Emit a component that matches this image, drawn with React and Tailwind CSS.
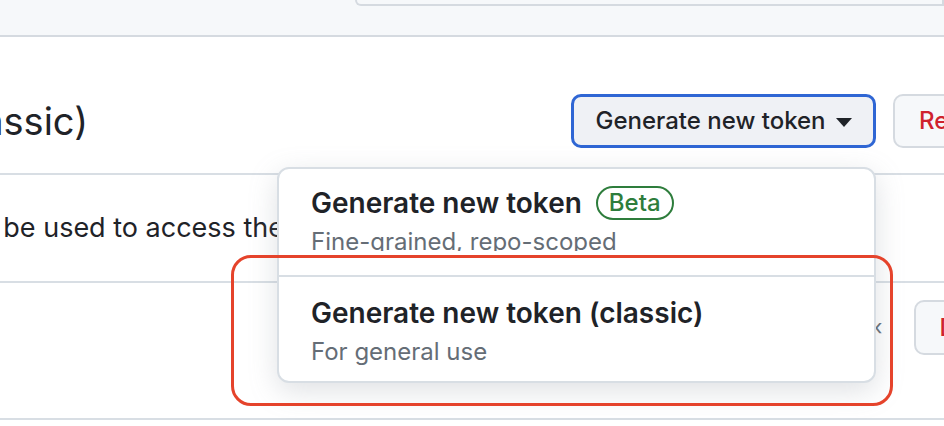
import React from "react";

function Caret() {
  return (
    <svg width="16" height="9" viewBox="0 0 16 9" className="ml-[10px] mt-[2px]">
      <path d="M0 0 L16 0 L8 9 Z" fill="#1f2328" />
    </svg>
  );
}

export default function App() {
  return (
    <div className="relative w-[944px] h-[426px] overflow-hidden bg-white font-[family-name:Inter,sans-serif] text-[#1f2328]">
      {/* top gray strip */}
      <div className="h-[37px] bg-[#f6f8fa] border-b-2 border-[#d5dae0]">
        <div className="ml-[355px] h-[6px] border-2 border-t-0 border-[#d5dae0] rounded-bl-[8px] bg-[#f6f8fa]" />
      </div>

      {/* header row */}
      <div className="flex items-center pt-[57px] pb-[25px] border-b-2 border-[#d8dee4]">
        <div className="w-[88px] shrink-0 flex justify-end whitespace-nowrap text-[38px] leading-[42px]">
          Personal access tokens (classic)
        </div>
        <div className="ml-[483px] shrink-0 flex items-center gap-[17px]">
          <div className="w-[305px] h-[54px] flex items-center justify-center rounded-[10px] border-[3px] border-[#2f66d4] bg-[#eff1f5] text-[24px] font-medium">
            Generate new token
            <Caret />
          </div>
          <div className="w-[200px] h-[54px] flex items-center pl-[24px] rounded-[10px] border-2 border-[#d5dae0] bg-[#f6f8fa] text-[24px] font-medium text-[#cf222e] whitespace-nowrap">
            Revoke all
          </div>
        </div>
      </div>

      {/* description row */}
      <div className="h-[108px] pt-[34px] border-b-2 border-[#d8dee4]">
        <div className="flex whitespace-nowrap text-[27px] leading-[38px]">
          <div className="w-[284px] shrink-0 flex justify-end">
            Tokens you have generated that can be used to access the
          </div>
          <div className="shrink-0 ml-[7px]">GitHub API.</div>
        </div>
      </div>

      {/* token row */}
      <div className="h-[137px] flex items-start border-b-2 border-[#d8dee4]">
        <div className="ml-[874px] mt-[34px] w-[12px] text-[22px] leading-[20px] text-[#656d76]">‹</div>
        <div className="ml-[32px] mt-[17px] shrink-0 w-[120px] h-[55px] flex items-center pl-[23px] rounded-[10px] border-2 border-[#d5dae0] bg-[#f6f8fa] text-[24px] font-medium text-[#cf222e]">
          Delete
        </div>
      </div>

      {/* dropdown menu overlay */}
      <div className="absolute left-[277px] top-[167px] w-[599px] h-[216px] rounded-[12px] border-2 border-[#d8dee4] bg-white shadow-[0_8px_28px_rgba(140,149,159,0.28)] overflow-hidden">
        <div className="h-[106px] pl-[32px] pt-[16px]">
          <div className="flex items-center h-[36px]">
            <span className="text-[28px] leading-[36px] font-semibold">Generate new token</span>
            <span className="ml-[14px] h-[34px] px-[11px] flex items-center rounded-full border-2 border-[#2e7d3c] text-[#2e7d3c] text-[24px] font-medium">
              Beta
            </span>
          </div>
          <div className="mt-[6px] h-[24px] overflow-hidden">
            <div className="text-[24px] leading-[30px] text-[#656d76]">Fine-grained, repo-scoped</div>
          </div>
        </div>
        <div className="border-t-2 border-[#d8dee4] pl-[32px] pt-[18px]">
          <div className="text-[28px] leading-[36px] font-semibold">Generate new token (classic)</div>
          <div className="mt-[6px] text-[24px] leading-[30px] text-[#656d76]">For general use</div>
        </div>
      </div>

      {/* red annotation */}
      <div className="absolute left-[231px] top-[255px] w-[662px] h-[151px] rounded-[20px] border-[3px] border-[#e5432b]" />
    </div>
  );
}
